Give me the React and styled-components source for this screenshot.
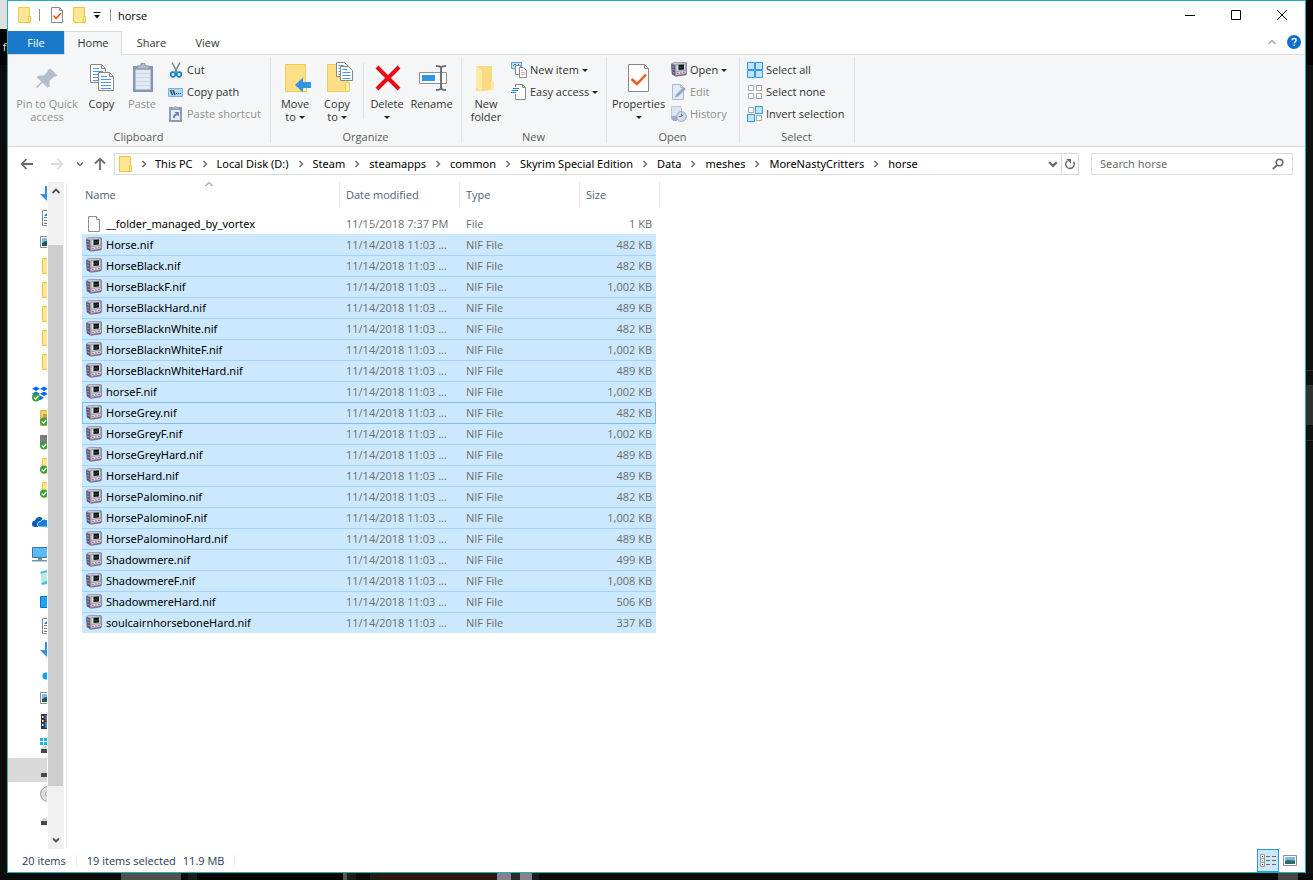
import React from 'react';
import styled, { createGlobalStyle, css } from 'styled-components';

const GlobalStyle = createGlobalStyle`
  * { box-sizing: border-box; }
  body { margin: 0; background: #0c0c0c; }
  body, button, input, table { font-family: "Open Sans", "Noto Sans", sans-serif; font-size: 11px; line-height: 14px; }
  button { margin: 0; padding: 0; border: 0; background: none; color: inherit; }
  svg { display: block; flex: none; }
`;

/* slightly wider face for file names and paths */
const nameFont = css`
  font-family: "Noto Sans", "Open Sans", sans-serif;
`;

/* ---------- icons ---------- */

const FolderIcon = ({ size = 16 }) => (
  <svg width={size} height={size} viewBox="0 0 16 16">
    <path d="M2.500.5h11V10h1v5.500h-12z" fill="#ffe694" stroke="#edc543" />
    <path d="M12.500 15V9.500h2V15z" fill="#fff0b8" stroke="#edc543" />
  </svg>
);

const CheckDocIcon = () => (
  <svg width="16" height="16" viewBox="0 0 16 16">
    <path d="M2.500.5h8l3 3v12h-11z" fill="#fff" stroke="#8a8a8a" />
    <path d="M10.500.5v3h3" fill="none" stroke="#8a8a8a" />
    <path d="M4.500 8.500l2.500 3 5-5.500" fill="none" stroke="#f25a1d" strokeWidth="1.800" />
  </svg>
);

const FileIcon = () => (
  <svg width="16" height="16" viewBox="0 0 16 16">
    <path d="M2.500.5h8l3 3v12h-11z" fill="#fbfbfb" stroke="#8e8e8e" />
    <path d="M10.500.5v3h3" fill="#fff" stroke="#8e8e8e" />
  </svg>
);

const NifIcon = () => (
  <svg width="16" height="16" viewBox="0 0 16 16">
    <path d="M0 2L2 .6 14.500 0 16 1.500v10l-1 1.800-10 1.500-4.300-2.500z" fill="#77738e" />
    <path d="M.5 2.500L4 3.500V14L1 12z" fill="#5d5973" />
    <path d="M1.200 4.500l2.300.7M1.200 7.300l2.300.7M1.500 10l2 .9" stroke="#a19eb5" />
    <path d="M.8 2L2.300 1 14 .4l1.500 1L4 2.800z" fill="#c9c7d6" />
    <path d="M4 3l11.500-1.300v9.800L4.500 13.800z" fill="#a5a2b8" />
    <path d="M5.500 3.300l8.500-.9v5.400l-8.500.9z" fill="#dcdae5" />
    <path d="M7.500 2.900l5.500-.5v5l-5.500.6z" fill="#0a150d" />
    <path d="M8 6.500l1.300-1.600 1.400 1 1.800-2" fill="none" stroke="#23703a" strokeWidth=".9" />
    <path d="M5.500 10.200l9-1.100v1.900l-9 1.500z" fill="#e3e1ea" />
    <path d="M6.300 10.700h1.200v1.200H6.300zM9.300 10.300h1.200v1.200H9.300zM12.300 9.800h1.200V11h-1.200z" fill="#a92b50" />
  </svg>
);

const PinIcon = () => (
  <svg width="32" height="32" viewBox="0 0 32 32">
    <path d="M19.500 6.500l7 7-2.300 1.300-1-.4-4.700 4.500.2 5.300-2 1.500-5.200-5-4.800 4.900-1.800.9.8-2 4.700-5-4.600-4.200 1.900-1.900 4.900.1 4.300-4.300-.5-1.300z" fill="#b2bdcd" />
  </svg>
);

const Page = ({ x, y }) => (
  <g transform={`translate(${x} ${y})`}>
    <path d="M.5.5h11l4 4v14H.5z" fill="#fff" stroke="#878787" />
    <path d="M11.500.5v4h4" fill="none" stroke="#878787" />
    <path d="M3 4.500h6M3 7.500h10M3 10.500h10M3 13.500h10M3 16.500h10" stroke="#4b97ea" />
  </g>
);

const CopyIcon = () => (
  <svg width="32" height="32" viewBox="0 0 32 32">
    <Page x={4} y={2} />
    <Page x={12} y={10} />
  </svg>
);

const PasteIcon = () => (
  <svg width="32" height="32" viewBox="0 0 32 32">
    <path d="M7 4h20v26H7z" fill="#8796b4" />
    <path d="M9.500 7.500h15v20h-15z" fill="#e3e9f3" />
    <path d="M10 11.500h14M10 15.500h14M10 19.500h14M10 23.500h14" stroke="#cad6e6" />
    <path d="M11 7V4h4V1.500h4V4h4v3z" fill="#b2bccd" stroke="#8796b4" />
  </svg>
);

const CutIcon = () => (
  <svg width="16" height="16" viewBox="0 0 16 16">
    <path d="M4 .5l5 9.500M12 .5L7 10" stroke="#7d8288" strokeWidth="1.500" />
    <circle cx="5" cy="12.500" r="2.300" fill="#d5efff" stroke="#1883c4" strokeWidth="1.700" />
    <circle cx="11" cy="12.500" r="2.300" fill="#d5efff" stroke="#1883c4" strokeWidth="1.700" />
  </svg>
);

const CopyPathIcon = () => (
  <svg width="16" height="16" viewBox="0 0 16 16">
    <path d="M.5 4.500h14v8H.5z" fill="#a9dcf8" stroke="#72b4dd" />
    <path d="M2.500 6l2 5M5 6l2 5" stroke="#1d2a3a" strokeWidth="1.200" />
    <path d="M8 9h1v1H8zM10 9h1v1h-1zM12 9h1v1h-1z" fill="#1d2a3a" />
  </svg>
);

const PasteShortcutIcon = () => (
  <svg width="16" height="16" viewBox="0 0 16 16">
    <path d="M1 1h13v15H1z" fill="#8d9cba" />
    <path d="M3 4h9v10H3z" fill="#e6ecf5" />
    <path d="M4.500 3V1.500h2V0h2v1.500h2V3z" fill="#aab5c9" />
    <path d="M5 12c0-3 1-4 3-4.500L6.500 6H11v4.500L9.500 9C8 9.500 7 10 7 12z" fill="#6f85aa" />
  </svg>
);

const BigFolder = () => <path d="M6.500 2.500h20v27h-20z" fill="#fddf86" stroke="#f0cb55" />;

const MoveToIcon = () => (
  <svg width="32" height="32" viewBox="0 0 32 32">
    <BigFolder />
    <path d="M23.500 21.500h4v8h-4z" fill="#fdebb0" stroke="#f0cb55" />
    <path d="M16 23l8-7.500v4.500h8v6h-8v4.500z" fill="#3096e6" />
  </svg>
);

const CopyToIcon = () => (
  <svg width="32" height="32" viewBox="0 0 32 32">
    <BigFolder />
    <path d="M24.500 20.500h4v9h-4z" fill="#fdebb0" stroke="#f0cb55" />
    {[[15.5, 0.5], [19.5, 4.5]].map(([x, y]) => (
      <g key={x}>
        <path d={`M${x} ${y}h8l4 4v10h-12z`} fill="#fff" stroke="#878787" />
        <path d={`M${x + 2} ${y + 3}h5m-5 3h8m-8 3h8m-8 3h8`} stroke="#4b97ea" />
      </g>
    ))}
  </svg>
);

const DeleteIcon = () => (
  <svg width="32" height="32" viewBox="0 0 32 32">
    <path d="M6 5l22 22M28 5L6 27" stroke="#e60b17" strokeWidth="4" />
  </svg>
);

const RenameIcon = () => (
  <svg width="32" height="32" viewBox="0 0 32 32">
    <path d="M3.500 10.500h27v11h-27z" fill="#fff" stroke="#909090" />
    <path d="M6 13h13v6H6z" fill="#3096e6" />
    <path d="M20 4c3 0 5 0 5 3v18c0 3-2 3-5 3M30 4c-3 0-5 0-5 3v18c0 3 2 3 5 3" fill="none" stroke="#707070" strokeWidth="2" />
  </svg>
);

const NewFolderIcon = () => (
  <svg width="32" height="32" viewBox="0 0 32 32">
    <path d="M6 4h16v15l2 1v7l-9 2H6z" fill="#f9da80" />
    <path d="M6 4l6 4v22l-6-4z" fill="#ffe9a6" />
    <path d="M21 19h3v8l-3 1z" fill="#ffe9a6" />
  </svg>
);

const NewItemIcon = () => (
  <svg width="16" height="16" viewBox="0 0 16 16">
    <path d="M.5.5h10v6H.5z" fill="#bfe3fa" stroke="#5aa4d8" />
    <path d="M2 4l2-2 2 2 2-2" fill="none" stroke="#2b74ad" />
    <path d="M4.500 3.500h5v9h-5z" fill="#fff" stroke="#8a8a8a" />
    <path d="M8.500 5.500h4l3 3v7h-7z" fill="#fff" stroke="#8a8a8a" />
    <path d="M10 8.500h2M10 10.500h4M10 12.500h4" stroke="#e7a2a2" />
  </svg>
);

const EasyAccessIcon = () => (
  <svg width="16" height="16" viewBox="0 0 16 16">
    <path d="M4.500 3V.5h7l3 3v12h-10V10" fill="#fff" stroke="#8a8a8a" />
    <path d="M11.500.5v3h3" fill="none" stroke="#8a8a8a" />
    <path d="M2 4.500h6M1 6.500h6M0 8.500h5" stroke="#2a86c8" />
  </svg>
);

const PropertiesIcon = () => (
  <svg width="32" height="32" viewBox="0 0 32 32">
    <path d="M5.500 2.500h16l4 4v23h-20z" fill="#fff" stroke="#878787" />
    <path d="M21.500 2.500v4h4" fill="none" stroke="#878787" />
    <path d="M8.500 17l5.500 5 9-9.500" fill="none" stroke="#f25a1d" strokeWidth="2.500" />
  </svg>
);

const EditIcon = () => (
  <svg width="16" height="16" viewBox="0 0 16 16">
    <path d="M1.500.5h8l3 3v12h-11z" fill="#e4ebf4" stroke="#a9b9cf" />
    <path d="M4 13.500l1-3 7.500-7.500 2.500 2-8 7.500z" fill="#93a7c4" />
    <path d="M9.500.5v3h3" fill="none" stroke="#a9b9cf" />
  </svg>
);

const HistoryIcon = () => (
  <svg width="16" height="16" viewBox="0 0 16 16">
    <path d="M.5.5h9l1 2v11H.5z" fill="#dbe4f0" stroke="#b7c5d9" />
    <path d="M0 10h6v5H2z" fill="#9dafca" />
    <circle cx="10.500" cy="10.500" r="4.800" fill="#d5deea" stroke="#8fa2bf" />
    <path d="M10.500 7.500v3l2-2M7.500 10.500h3" fill="none" stroke="#6f85a8" />
  </svg>
);

const squares = [[0, 0], [8, 0], [0, 8], [8, 8]];

const SelectIcon = ({ filled }) => (
  <svg width="16" height="16" viewBox="0 0 16 16">
    {squares.map(([x, y], i) =>
      filled.includes(i) ? (
        <path key={i} d={`M${x + 0.5} ${y + 0.5}h7v7h-7z`} fill="#bfe5fb" stroke="#3596df" />
      ) : (
        <path key={i} d={`M${x + 1.5} ${y + 1.5}h5v5h-5z`} fill="#fff" stroke="#a5a5a5" />
      )
    )}
  </svg>
);

const Chevron = ({ dir = 'right', color = '#6b6b6b', size = 8, weight = 1.5 }) => {
  const d = { right: 'M2.500 1l3 3-3 3', down: 'M1 2.500l3 3 3-3', up: 'M.5 6L4 2.500 7.500 6' }[dir];
  return (
    <svg width={size} height={size} viewBox="0 0 8 8">
      <path d={d} fill="none" stroke={color} strokeWidth={weight} />
    </svg>
  );
};

const Arrow = ({ dir, color = '#6b6b6b' }) => {
  const d = {
    left: 'M13 7H2M6.500 2L1.700 7l4.800 5',
    right: 'M1 7h11M7.500 2l4.800 5-4.800 5',
    up: 'M7 13V2M2 6.500L7 1.700l5 4.800',
  }[dir];
  return (
    <svg width="14" height="14" viewBox="0 0 14 14">
      <path d={d} fill="none" stroke={color} strokeWidth="1.800" />
    </svg>
  );
};

const Caret = styled.span`
  display: inline-block;
  margin-left: ${p => (p.$alone ? 0 : 3)}px;
  vertical-align: 2px;
  border: 3px solid transparent;
  border-top-color: #222;
  border-bottom: 0;
`;

/* icons of the folder tree */

const Tick = () => (
  <>
    <circle cx="4" cy="11.500" r="4" fill="#35a13a" />
    <path d="M1.800 11.500l1.700 1.700 2.800-3.200" fill="none" stroke="#fff" strokeWidth="1.300" />
  </>
);

const Drive = () => (
  <>
    <path d="M3 8h10l2 3H1z" fill="#d4d7d9" />
    <path d="M1 11h14v4H1z" fill="#45494c" />
  </>
);

const treeShapes = {
  download: <path d="M5 0h6v8h5l-8 8-8-8h5z" fill="#3191e0" />,
  doc: (
    <>
      <path d="M2.500.5h8l3 3v12h-11z" fill="#fff" stroke="#8a8a8a" />
      <path d="M4 6l2.500-3L8 6z" fill="#2a86c8" />
      <path d="M4 7.500h8M4 10.500h8M4 13.500h8" stroke="#6a7a8a" />
    </>
  ),
  picture: (
    <>
      <path d="M.5 2.500h15v11H.5z" fill="#fff" stroke="#8a8a8a" />
      <path d="M2 4h12v8H2z" fill="#7db9ee" />
      <path d="M2 9l4-2 8 2v3H2z" fill="#1f5b5b" />
    </>
  ),
  folder: <path d="M2.500.5h11v15h-11z" fill="#ffe694" stroke="#edc543" />,
  dropbox: (
    <path
      d="M4 .5l4 2.300-4 2.300L0 2.800zM12 .5l4 2.300-4 2.300-4-2.300zM4 5.500l4 2.300-4 2.300-4-2.300zM12 5.500l4 2.300-4 2.300-4-2.300zM8 9.500l4 2.300-4 2.500-4-2.500z"
      fill="#0a66f5"
    />
  ),
  user: (
    <>
      <path d="M.5.500h13v15H.5z" fill="#f6cf53" stroke="#e0b73c" />
      <path d="M3 4h8v8H3z" fill="#c89b63" />
    </>
  ),
  device: <path d="M0 1h14v12H0z" fill="#7c7c80" />,
  cloud: (
    <>
      <path d="M0 10c0-2 1-3.500 3-3.500C4 3 8 2 10.500 4.500L6 13H3c-2 0-3-1-3-3z" fill="#0b5fb8" />
      <path d="M5.500 10.500c0-2 1-3 3-3 1-3 7.500-3 7.500 0v5.500H8c-1.500 0-2.500-1-2.500-2.500z" fill="#0f7fe0" stroke="#fff" strokeWidth=".8" />
    </>
  ),
  computer: (
    <>
      <path d="M.5 1.500h15v10H.5z" fill="#58bdf7" stroke="#44759b" />
      <path d="M6 12h4v2H6zM0 14h16v1.500H0z" fill="#7295ae" />
    </>
  ),
  cube: (
    <>
      <path d="M1 4l8-3v13l-8-2z" fill="#b8ebe9" />
      <path d="M0 2l7-2v2L1 4zM1 13l6-2v3l-5 1z" fill="#3fc6cc" />
    </>
  ),
  desktop: <path d="M.5 2.500h15v11H.5z" fill="#1ba4fa" stroke="#1173bd" />,
  music: <circle cx="6" cy="10" r="3.500" fill="#0ea2f3" />,
  video: (
    <>
      <path d="M1 0h14v15H1z" fill="#363636" />
      <path d="M2 2h1.500v2H2zM2 6h1.500v2H2zM2 10h1.500v2H2z" fill="#fff" />
      <path d="M5 1h9v6H5z" fill="#4c69d6" />
      <path d="M5 8h9v6H5z" fill="#3d8ad8" />
      <path d="M5 4l3 3H5z" fill="#c23b3b" />
    </>
  ),
  windrive: (
    <>
      <path d="M0 0h3v3H0zM4 0h3v3H4zM0 4h3v3H0zM4 4h3v3H4z" fill="#15b5f1" />
      <Drive />
    </>
  ),
  drive: <Drive />,
  disc: (
    <>
      <circle cx="8" cy="8" r="7.500" fill="#dcdcdc" stroke="#9d9d9d" />
      <circle cx="8" cy="8" r="2.500" fill="#fff" stroke="#9d9d9d" />
    </>
  ),
};

/* ---------- desktop and window ---------- */

const Desktop = styled.div`
  display: grid;
  grid-template-columns: 7px minmax(0, 1fr) 7px;
  grid-template-rows: minmax(0, 1fr) 7px;
  height: 100vh;
  min-height: 880px;
`;

const LeftEdge = styled.div`
  padding-top: 40px;
  overflow: hidden;
  color: #e8e8e8;
  background: linear-gradient(#dedede 0 29px, #000 29px 65px, #0c0c0c 65px);
`;

const RightEdge = styled.div`
  background: linear-gradient(#000 0 65px, #111 65px 370px, #2a2a2a 370px 371px, #111 371px 385px, #303030 385px 425px, #111 425px 440px, #2a2a2a 440px 441px, #111 441px);
`;

const BottomEdge = styled.div`
  grid-column: 1 / -1;
  background: linear-gradient(90deg, #0c0c0c 0 121px, #505050 121px 181px, #0c0c0c 181px 188px, #1c1c1c 188px 197px, #050505 197px 343px, #5a564e 343px 347px, #1c1c1c 347px 356px, #0c0c0c 356px 370px, #1c1c1c 370px 378px, #2e1710 378px 497px, #8a8090 497px 511px, #2a2a26 511px 520px, #8a8090 520px 532px, #1c1c1c 532px 539px, #0c0c0c 539px 1278px, #454545 1278px 1298px, #0c0c0c 1298px);
`;

const Window = styled.div`
  display: flex;
  flex-direction: column;
  min-width: 0;
  background: #fff;
  border: 1px solid #1bb1bd;
  color: #000;
`;

const TitleBar = styled.header`
  display: flex;
  align-items: center;
  height: 30px;
  padding: 0 0 2px 8px;
`;

const QuickButton = styled.button`
  display: flex;
  align-items: center;
  justify-content: center;
  width: ${p => p.$w}px;
  height: 22px;
`;

const TitleDivider = styled.span`
  width: 1px;
  height: 12px;
  margin: 0 7px;
  background: #8f8f8f;
`;

const Title = styled.h1`
  flex: 1;
  margin: 0;
  font-size: 11px;
  font-weight: 400;
  line-height: 15px;
`;

const WindowButton = styled.button`
  display: flex;
  align-items: center;
  justify-content: center;
  width: 46px;
  height: 28px;
`;

const TabRow = styled.div`
  display: flex;
  height: 24px;
  padding-right: 4px;
  border-bottom: 1px solid #dadbdc;
`;

const Tab = styled.button`
  width: ${p => p.$w}px;
  height: 23px;
  color: #333;
  ${p => p.$file && css`
    background: #1979ca;
    color: #fff;
  `}
  ${p => p.$active && css`
    height: 24px;
    padding-bottom: 2px;
    background: #f5f6f7;
    border: 1px solid #dadbdc;
    border-bottom: 0;
  `}
`;

const TabTools = styled.div`
  display: flex;
  align-items: center;
  gap: 11px;
  margin-left: auto;
  padding-bottom: 2px;
`;

/* ---------- ribbon ---------- */

const Ribbon = styled.section`
  display: flex;
  height: 92px;
  padding: 2px 0 3px;
  background: #f5f6f7;
  border-bottom: 1px solid #dadbdc;
`;

const Group = styled.div`
  display: flex;
  flex-direction: column;
  width: ${p => p.$w}px;
  padding-left: 3px;
  border-right: 1px solid #e1e2e3;
`;

const GroupBody = styled.div`
  display: flex;
  flex: 1;
`;

const GroupLabel = styled.div`
  padding-right: 4px;
  line-height: 13px;
  color: #5a5a5a;
  text-align: center;
`;

const BigButton = styled.button`
  display: flex;
  flex-direction: column;
  align-items: center;
  width: ${p => p.$w}px;
  padding-top: 5px;
  line-height: 13px;
  color: ${p => (p.disabled ? '#8f8f8f' : '#333')};
  span { margin-top: 3px; }
  span span { margin-top: 0; }
`;

const SmallColumn = styled.div`
  display: flex;
  flex-direction: column;
  align-items: flex-start;
  padding: 2px 0 0 4px;
`;

const SmallButton = styled.button`
  display: flex;
  align-items: center;
  gap: 3px;
  height: 22px;
  white-space: nowrap;
  color: ${p => (p.disabled ? '#8f8f8f' : '#333')};
`;

const InnerDivider = styled.span`
  width: 1px;
  height: 56px;
  margin: 6px 0 0 5px;
  background: #e1e2e3;
`;

/* ---------- address row ---------- */

const AddressRow = styled.div`
  display: flex;
  align-items: center;
  height: 34px;
  padding-right: 12px;
`;

const History = styled.div`
  display: grid;
  grid-template-columns: 28px 32px 14px 26px;
  justify-items: center;
  align-items: center;
  padding: 0 1px 0 5px;
`;

const PathBox = styled.nav`
  display: flex;
  align-items: center;
  flex: 1;
  min-width: 0;
  height: 22px;
  padding-left: 2px;
  border: 1px solid #d9d9d9;
`;

const Crumb = styled.button`
  ${nameFont}
  white-space: nowrap;
`;

const CrumbArrow = styled.span`
  display: flex;
  justify-content: center;
  width: 24px;
  &:first-of-type { width: 22px; }
`;

const PathTools = styled.div`
  display: flex;
  align-self: stretch;
  margin-left: auto;
`;

const PathButton = styled.button`
  display: flex;
  align-items: center;
  justify-content: center;
  width: 17px;
  border-left: ${p => (p.$line ? '1px solid #d9d9d9' : '0')};
`;

const SearchBox = styled.label`
  display: flex;
  align-items: center;
  width: 202px;
  height: 22px;
  margin-left: 12px;
  padding: 0 8px;
  border: 1px solid #d9d9d9;
  input {
    flex: 1;
    min-width: 0;
    height: 14px;
    padding: 0;
    border: 0;
    outline: 0;
    ${nameFont}
  }
  input::placeholder { color: #6d6d6d; }
`;

/* ---------- main area ---------- */

const Main = styled.main`
  display: flex;
  flex: 1;
  min-height: 0;
  padding-top: 1px;
`;

const Tree = styled.nav`
  width: 39px;
  overflow: hidden;
`;

const TreeGroup = styled.div`
  margin-bottom: 8px;
`;

const TreeItem = styled.button`
  display: flex;
  align-items: center;
  width: 100%;
  height: 24px;
  padding-left: ${p => (p.$root ? 24 : 32)}px;
  background: ${p => (p.$selected ? '#d9d9d9' : 'none')};
`;

const ScrollBar = styled.div`
  display: flex;
  flex-direction: column;
  width: 16px;
  margin-left: 1px;
  background: #f0f0f0;
`;

const ScrollArrow = styled.button`
  display: flex;
  align-items: center;
  justify-content: center;
  height: 18px;
  padding-right: 1px;
`;

const ScrollTrack = styled.div`
  flex: 1;
  display: grid;
  grid-template-rows: 45fr 541fr 45fr;
`;

const Thumb = styled.div`
  grid-row: 2;
  margin-right: 1px;
  background: #cdcdcd;
`;

const FilePane = styled.div`
  flex: 1;
  min-width: 0;
  margin-left: 2px;
  padding-left: 15px;
  border-left: 1px solid #f3f3f3;
`;

const FileTable = styled.table`
  width: 578px;
  table-layout: fixed;
  border-collapse: separate;
  border-spacing: 0;
`;

const HeadCell = styled.th`
  position: relative;
  height: 31px;
  padding: 0 0 5px;
  font-weight: 400;
  text-align: left;
  color: #4c607a;
  button {
    display: block;
    width: 100%;
    height: 26px;
    padding-left: ${p => (p.$first ? 3 : 6)}px;
    border-right: 1px solid #e5e5e5;
    text-align: left;
  }
`;

const SortMark = styled.span`
  position: absolute;
  top: -2px;
  left: 123px;
`;

const lineColor = p => (p.$focus || p.$afterFocus ? '#7abdf6' : p.$first ? '#cce8ff' : '#a3d3fd');

const FileRow = styled.tr`
  td {
    height: 21px;
    padding: 0 0 0 6px;
    white-space: nowrap;
    overflow: hidden;
    color: #6d6d6d;
    border-top: 1px solid transparent;
  }
  td:first-child {
    padding-left: 4px;
    color: #000;
  }
  td:nth-child(4) {
    padding-right: 4px;
    text-align: right;
  }
  ${p => p.$selected && css`
    td:not(:last-child) {
      background: #cce8ff;
      border-top-color: ${lineColor};
    }
  `}
  ${p => p.$focus && css`
    td:first-child {
      padding-left: 3px;
      border-left: 1px solid #7abdf6;
    }
    td:nth-child(4) {
      padding-right: 3px;
      border-right: 1px solid #7abdf6;
    }
  `}
`;

const FileName = styled.div`
  ${nameFont}
  display: flex;
  align-items: center;
  gap: 4px;
`;

const StatusBar = styled.footer`
  display: flex;
  align-items: center;
  height: 23px;
  padding: 0 4px 0 14px;
  color: #1e395b;
`;

const StatusText = styled.span`
  margin-right: ${p => (p.$tight ? 7 : 10)}px;
`;

const StatusDivider = styled.span`
  width: 1px;
  height: 12px;
  margin-right: 10px;
  background: #ececec;
`;

const ViewButtons = styled.div`
  display: flex;
  align-self: stretch;
  margin-left: auto;
`;

const ViewButton = styled.button`
  display: flex;
  align-items: center;
  justify-content: center;
  width: 22px;
  ${p => p.$active && css`
    background: #cce8f6;
    border: 1px solid #2a9ade;
  `}
`;

/* ---------- data ---------- */

const crumbs = ['This PC', 'Local Disk (D:)', 'Steam', 'steamapps', 'common', 'Skyrim Special Edition', 'Data', 'meshes', 'MoreNastyCritters', 'horse'];

const nifFiles = [
  ['Horse.nif', '482 KB'],
  ['HorseBlack.nif', '482 KB'],
  ['HorseBlackF.nif', '1,002 KB'],
  ['HorseBlackHard.nif', '489 KB'],
  ['HorseBlacknWhite.nif', '482 KB'],
  ['HorseBlacknWhiteF.nif', '1,002 KB'],
  ['HorseBlacknWhiteHard.nif', '489 KB'],
  ['horseF.nif', '1,002 KB'],
  ['HorseGrey.nif', '482 KB'],
  ['HorseGreyF.nif', '1,002 KB'],
  ['HorseGreyHard.nif', '489 KB'],
  ['HorseHard.nif', '489 KB'],
  ['HorsePalomino.nif', '482 KB'],
  ['HorsePalominoF.nif', '1,002 KB'],
  ['HorsePalominoHard.nif', '489 KB'],
  ['Shadowmere.nif', '499 KB'],
  ['ShadowmereF.nif', '1,008 KB'],
  ['ShadowmereHard.nif', '506 KB'],
  ['soulcairnhorseboneHard.nif', '337 KB'],
];

const focused = 8;

const tree = [
  [['download'], ['doc'], ['picture'], ['folder'], ['folder'], ['folder'], ['folder'], ['folder']],
  [['dropbox', 'root', 'tick'], ['user', '', 'tick'], ['device', '', 'tick'], ['folder', '', 'tick'], ['folder', '', 'tick']],
  [['cloud', 'root']],
  [['computer', 'root'], ['cube'], ['desktop'], ['doc'], ['download'], ['music'], ['picture'], ['video'], ['windrive'], ['drive', 'selected'], ['disc'], ['drive']],
];

function Big({ icon, lines, w, menu, disabled }) {
  return (
    <BigButton $w={w} disabled={disabled}>
      {icon}
      <span>
        {lines[0]}
        {(lines[1] || menu) && <br />}
        {lines[1]}
        {menu && <Caret $alone={!lines[1]} />}
      </span>
    </BigButton>
  );
}

function Small({ icon, text, menu, disabled }) {
  return (
    <SmallButton disabled={disabled}>
      {icon}
      <span>
        {text}
        {menu && <Caret />}
      </span>
    </SmallButton>
  );
}

function App() {
  return (
    <Desktop>
      <GlobalStyle />
      <LeftEdge>&nbsp;f</LeftEdge>
      <Window>
        <TitleBar>
          <QuickButton $w={16} aria-label="Window menu"><FolderIcon /></QuickButton>
          <TitleDivider />
          <QuickButton $w={20} aria-label="Properties"><CheckDocIcon /></QuickButton>
          <QuickButton $w={24} aria-label="New folder"><FolderIcon /></QuickButton>
          <QuickButton $w={12} aria-label="Customize Quick Access Toolbar">
            <svg width="8" height="8" viewBox="0 0 8 8">
              <path d="M.5 1h7v1h-7zM1 4h6L4 7.500z" fill="#111" />
            </svg>
          </QuickButton>
          <TitleDivider />
          <Title>horse</Title>
          <WindowButton aria-label="Minimize">
            <svg width="10" height="10"><path d="M0 5.500h10" stroke="#000" /></svg>
          </WindowButton>
          <WindowButton aria-label="Maximize">
            <svg width="10" height="10"><path d="M.5.5h9v9h-9z" fill="none" stroke="#000" /></svg>
          </WindowButton>
          <WindowButton aria-label="Close">
            <svg width="10" height="10"><path d="M0 0l10 10M10 0L0 10" stroke="#000" /></svg>
          </WindowButton>
        </TitleBar>

        <TabRow>
          <Tab $w={56} $file>File</Tab>
          <Tab $w={58} $active>Home</Tab>
          <Tab $w={59}>Share</Tab>
          <Tab $w={53}>View</Tab>
          <TabTools>
            <button aria-label="Minimize the Ribbon"><Chevron dir="up" color="#9a9a9a" weight={1.2} /></button>
            <button aria-label="Help">
              <svg width="14" height="14" viewBox="0 0 14 14">
                <circle cx="7" cy="7" r="7" fill="#0b6fd0" />
                <path d="M5 5.300C5 2.800 9.200 2.900 9.200 5.200 9.200 6.600 7.200 6.700 7.200 8.500M7.200 9.600v1.500" fill="none" stroke="#fff" strokeWidth="1.400" />
              </svg>
            </button>
          </TabTools>
        </TabRow>

        <Ribbon>
          <Group $w={263}>
            <GroupBody>
              <Big w={72} icon={<PinIcon />} lines={['Pin to Quick', 'access']} disabled />
              <Big w={37} icon={<CopyIcon />} lines={['Copy']} />
              <Big w={44} icon={<PasteIcon />} lines={['Paste']} disabled />
              <SmallColumn>
                <Small icon={<CutIcon />} text="Cut" />
                <Small icon={<CopyPathIcon />} text="Copy path" />
                <Small icon={<PasteShortcutIcon />} text="Paste shortcut" disabled />
              </SmallColumn>
            </GroupBody>
            <GroupLabel>Clipboard</GroupLabel>
          </Group>
          <Group $w={191}>
            <GroupBody>
              <Big w={42} icon={<MoveToIcon />} lines={['Move', 'to']} menu />
              <Big w={42} icon={<CopyToIcon />} lines={['Copy', 'to']} menu />
              <InnerDivider />
              <Big w={46} icon={<DeleteIcon />} lines={['Delete']} menu />
              <Big w={43} icon={<RenameIcon />} lines={['Rename']} />
            </GroupBody>
            <GroupLabel>Organize</GroupLabel>
          </Group>
          <Group $w={145}>
            <GroupBody>
              <Big w={42} icon={<NewFolderIcon />} lines={['New', 'folder']} />
              <SmallColumn>
                <Small icon={<NewItemIcon />} text="New item" menu />
                <Small icon={<EasyAccessIcon />} text="Easy access" menu />
              </SmallColumn>
            </GroupBody>
            <GroupLabel>New</GroupLabel>
          </Group>
          <Group $w={133}>
            <GroupBody>
              <Big w={57} icon={<PropertiesIcon />} lines={['Properties']} menu />
              <SmallColumn>
                <Small icon={<NifIcon />} text="Open" menu />
                <Small icon={<EditIcon />} text="Edit" disabled />
                <Small icon={<HistoryIcon />} text="History" disabled />
              </SmallColumn>
            </GroupBody>
            <GroupLabel>Open</GroupLabel>
          </Group>
          <Group $w={115}>
            <GroupBody>
              <SmallColumn>
                <Small icon={<SelectIcon filled={[0, 1, 2, 3]} />} text="Select all" />
                <Small icon={<SelectIcon filled={[]} />} text="Select none" />
                <Small icon={<SelectIcon filled={[1, 2]} />} text="Invert selection" />
              </SmallColumn>
            </GroupBody>
            <GroupLabel>Select</GroupLabel>
          </Group>
        </Ribbon>

        <AddressRow>
          <History>
            <button aria-label="Back"><Arrow dir="left" /></button>
            <button aria-label="Forward"><Arrow dir="right" color="#dcdcdc" /></button>
            <button aria-label="Recent locations"><Chevron dir="down" /></button>
            <button aria-label="Up"><Arrow dir="up" /></button>
          </History>
          <PathBox>
            <FolderIcon />
            {crumbs.map(name => (
              <React.Fragment key={name}>
                <CrumbArrow><Chevron /></CrumbArrow>
                <Crumb>{name}</Crumb>
              </React.Fragment>
            ))}
            <PathTools>
              <PathButton aria-label="Previous locations"><Chevron dir="down" size={10} weight={1.7} /></PathButton>
              <PathButton $line aria-label="Refresh">
                <svg width="12" height="12" viewBox="0 0 12 12">
                  <path d="M3.500 2.800A4.200 4.200 0 1 0 9.500 4" fill="none" stroke="#6b6b6b" strokeWidth="1.600" />
                  <path d="M2 1h5v4.500z" fill="#6b6b6b" />
                </svg>
              </PathButton>
            </PathTools>
          </PathBox>
          <SearchBox>
            <input type="search" placeholder="Search horse" aria-label="Search horse" />
            <svg width="12" height="12" viewBox="0 0 12 12">
              <circle cx="7.500" cy="4.500" r="3.300" fill="none" stroke="#6b6b6b" strokeWidth="1.600" />
              <path d="M5 7L.8 11.200" stroke="#6b6b6b" strokeWidth="1.800" />
            </svg>
          </SearchBox>
        </AddressRow>

        <Main>
          <Tree aria-label="Navigation">
            {tree.map((items, g) => (
              <TreeGroup key={g}>
                {items.map(([shape, kind, tick], i) => (
                  <TreeItem key={i} aria-label={shape} $root={kind === 'root'} $selected={kind === 'selected'}>
                    <svg width="16" height="16" viewBox="0 0 16 16">
                      {treeShapes[shape]}
                      {tick && <Tick />}
                    </svg>
                  </TreeItem>
                ))}
              </TreeGroup>
            ))}
          </Tree>
          <ScrollBar>
            <ScrollArrow aria-label="Scroll up"><Chevron dir="up" color="#505050" weight={1.8} /></ScrollArrow>
            <ScrollTrack><Thumb /></ScrollTrack>
            <ScrollArrow aria-label="Scroll down"><Chevron dir="down" color="#505050" weight={1.8} /></ScrollArrow>
          </ScrollBar>
          <FilePane>
            <FileTable>
              <colgroup>
                <col width="258" />
                <col width="120" />
                <col width="120" />
                <col width="76" />
                <col width="4" />
              </colgroup>
              <thead>
                <tr>
                  <HeadCell $first aria-sort="ascending">
                    <button>Name</button>
                    <SortMark><Chevron dir="up" color="#6b6b6b" weight={1} /></SortMark>
                  </HeadCell>
                  <HeadCell><button>Date modified</button></HeadCell>
                  <HeadCell><button>Type</button></HeadCell>
                  <HeadCell colSpan={2}><button>Size</button></HeadCell>
                </tr>
              </thead>
              <tbody>
                <FileRow>
                  <td><FileName><FileIcon />__folder_managed_by_vortex</FileName></td>
                  <td>11/15/2018 7:37 PM</td>
                  <td>File</td>
                  <td>1 KB</td>
                  <td />
                </FileRow>
                {nifFiles.map(([name, size], i) => (
                  <FileRow key={name} $selected $first={i === 0} $focus={i === focused} $afterFocus={i === focused + 1}>
                    <td><FileName><NifIcon />{name}</FileName></td>
                    <td>11/14/2018 11:03 ...</td>
                    <td>NIF File</td>
                    <td>{size}</td>
                    <td />
                  </FileRow>
                ))}
              </tbody>
            </FileTable>
          </FilePane>
        </Main>

        <StatusBar>
          <StatusText>20 items</StatusText>
          <StatusDivider />
          <StatusText $tight>19 items selected</StatusText>
          <StatusText>11.9 MB</StatusText>
          <StatusDivider />
          <ViewButtons>
            <ViewButton $active aria-label="Details view">
              <svg width="16" height="14" viewBox="0 0 16 14">
                <path d="M.5.5h4v4h-4zM.5 4.500h4v4h-4zM.5 8.500h4v4h-4z" fill="#fff" stroke="#9a9a9a" />
                <path d="M2 2h1v1H2z" fill="#333" />
                <path d="M2 6h1v1H2z" fill="#3a8ee0" />
                <path d="M2 10h1v1H2z" fill="#d22" />
                <path d="M6 2.500h4M12 2.500h4M6 6.500h4M12 6.500h4M6 10.500h4M12 10.500h4" stroke="#6d6d6d" />
              </svg>
            </ViewButton>
            <ViewButton aria-label="Large thumbnails">
              <svg width="14" height="12" viewBox="0 0 14 12">
                <path d="M.5.5h13v10H.5z" fill="#fff" stroke="#8f8f8f" />
                <path d="M2 2h10v7H2z" fill="#7fb9f4" />
                <path d="M2 6c3-2 6 0 10-.5V9H2z" fill="#2f6b62" />
              </svg>
            </ViewButton>
          </ViewButtons>
        </StatusBar>
      </Window>
      <RightEdge />
      <BottomEdge />
    </Desktop>
  );
}

export default App;
